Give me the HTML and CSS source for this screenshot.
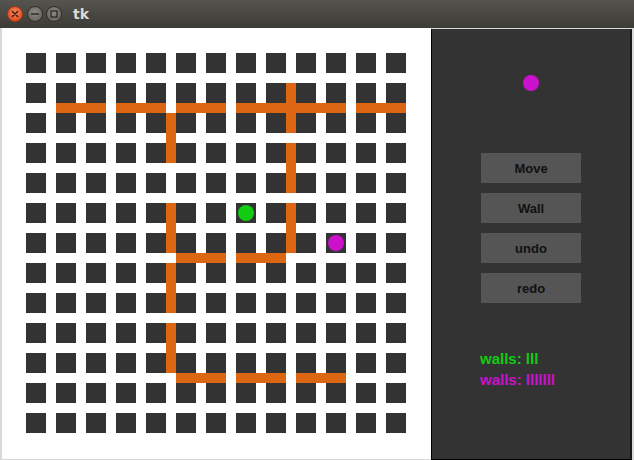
FILE: index.html
```html
<!DOCTYPE html>
<html>
<head>
<meta charset="utf-8">
<link rel="stylesheet" href="styles.css">
</head>
<body>
<div class="titlebar">
  <div class="wbtns">
    <svg class="wbtn" width="16" height="16" viewBox="0 0 16 16">
      <defs><radialGradient id="gc" cx="50%" cy="40%" r="60%"><stop offset="0" stop-color="#f6875c"/><stop offset="1" stop-color="#df4a1c"/></radialGradient></defs>
      <circle cx="8" cy="8" r="7.5" fill="url(#gc)" stroke="#9b3a15" stroke-width="1"/>
      <path d="M5.4 5.4 L10.6 10.6 M10.6 5.4 L5.4 10.6" stroke="#3b1a0c" stroke-width="1.4" stroke-linecap="round"/>
    </svg>
    <svg class="wbtn" width="16" height="16" viewBox="0 0 16 16">
      <defs><radialGradient id="gm" cx="50%" cy="40%" r="60%"><stop offset="0" stop-color="#8a8984"/><stop offset="1" stop-color="#66655f"/></radialGradient></defs>
      <circle cx="8" cy="8" r="7.5" fill="url(#gm)" stroke="#2f2e2a" stroke-width="1"/>
      <path d="M4.6 8 L11.4 8" stroke="#2b2a27" stroke-width="1.5" stroke-linecap="round"/>
    </svg>
    <svg class="wbtn" width="16" height="16" viewBox="0 0 16 16">
      <circle cx="8" cy="8" r="7.5" fill="url(#gm)" stroke="#2f2e2a" stroke-width="1"/>
      <rect x="5" y="5" width="6" height="6" fill="none" stroke="#2b2a27" stroke-width="1.3"/>
    </svg>
  </div>
  <div class="title">tk</div>
</div>
<div class="main">
  <div class="canvas">
    <div class="board" id="board">
      <div class="sq"></div><div class="sq"></div><div class="sq"></div><div class="sq"></div><div class="sq"></div><div class="sq"></div><div class="sq"></div><div class="sq"></div><div class="sq"></div><div class="sq"></div><div class="sq"></div><div class="sq"></div><div class="sq"></div>
      <div class="sq"></div><div class="sq"></div><div class="sq"></div><div class="sq"></div><div class="sq"></div><div class="sq"></div><div class="sq"></div><div class="sq"></div><div class="sq"></div><div class="sq"></div><div class="sq"></div><div class="sq"></div><div class="sq"></div>
      <div class="sq"></div><div class="sq"></div><div class="sq"></div><div class="sq"></div><div class="sq"></div><div class="sq"></div><div class="sq"></div><div class="sq"></div><div class="sq"></div><div class="sq"></div><div class="sq"></div><div class="sq"></div><div class="sq"></div>
      <div class="sq"></div><div class="sq"></div><div class="sq"></div><div class="sq"></div><div class="sq"></div><div class="sq"></div><div class="sq"></div><div class="sq"></div><div class="sq"></div><div class="sq"></div><div class="sq"></div><div class="sq"></div><div class="sq"></div>
      <div class="sq"></div><div class="sq"></div><div class="sq"></div><div class="sq"></div><div class="sq"></div><div class="sq"></div><div class="sq"></div><div class="sq"></div><div class="sq"></div><div class="sq"></div><div class="sq"></div><div class="sq"></div><div class="sq"></div>
      <div class="sq"></div><div class="sq"></div><div class="sq"></div><div class="sq"></div><div class="sq"></div><div class="sq"></div><div class="sq"></div><div class="sq"></div><div class="sq"></div><div class="sq"></div><div class="sq"></div><div class="sq"></div><div class="sq"></div>
      <div class="sq"></div><div class="sq"></div><div class="sq"></div><div class="sq"></div><div class="sq"></div><div class="sq"></div><div class="sq"></div><div class="sq"></div><div class="sq"></div><div class="sq"></div><div class="sq"></div><div class="sq"></div><div class="sq"></div>
      <div class="sq"></div><div class="sq"></div><div class="sq"></div><div class="sq"></div><div class="sq"></div><div class="sq"></div><div class="sq"></div><div class="sq"></div><div class="sq"></div><div class="sq"></div><div class="sq"></div><div class="sq"></div><div class="sq"></div>
      <div class="sq"></div><div class="sq"></div><div class="sq"></div><div class="sq"></div><div class="sq"></div><div class="sq"></div><div class="sq"></div><div class="sq"></div><div class="sq"></div><div class="sq"></div><div class="sq"></div><div class="sq"></div><div class="sq"></div>
      <div class="sq"></div><div class="sq"></div><div class="sq"></div><div class="sq"></div><div class="sq"></div><div class="sq"></div><div class="sq"></div><div class="sq"></div><div class="sq"></div><div class="sq"></div><div class="sq"></div><div class="sq"></div><div class="sq"></div>
      <div class="sq"></div><div class="sq"></div><div class="sq"></div><div class="sq"></div><div class="sq"></div><div class="sq"></div><div class="sq"></div><div class="sq"></div><div class="sq"></div><div class="sq"></div><div class="sq"></div><div class="sq"></div><div class="sq"></div>
      <div class="sq"></div><div class="sq"></div><div class="sq"></div><div class="sq"></div><div class="sq"></div><div class="sq"></div><div class="sq"></div><div class="sq"></div><div class="sq"></div><div class="sq"></div><div class="sq"></div><div class="sq"></div><div class="sq"></div>
      <div class="sq"></div><div class="sq"></div><div class="sq"></div><div class="sq"></div><div class="sq"></div><div class="sq"></div><div class="sq"></div><div class="sq"></div><div class="sq"></div><div class="sq"></div><div class="sq"></div><div class="sq"></div><div class="sq"></div>

      <div class="wall h" style="left:30px;top:50px"></div>
      <div class="wall h" style="left:90px;top:50px"></div>
      <div class="wall h" style="left:150px;top:50px"></div>
      <div class="wall h" style="left:210px;top:50px"></div>
      <div class="wall h" style="left:270px;top:50px"></div>
      <div class="wall h" style="left:330px;top:50px"></div>
      <div class="wall v" style="left:260px;top:30px"></div>
      <div class="wall v" style="left:260px;top:90px"></div>
      <div class="wall v" style="left:260px;top:150px"></div>
      <div class="wall v" style="left:140px;top:60px"></div>
      <div class="wall v" style="left:140px;top:150px"></div>
      <div class="wall v" style="left:140px;top:210px"></div>
      <div class="wall v" style="left:140px;top:270px"></div>
      <div class="wall h" style="left:150px;top:200px"></div>
      <div class="wall h" style="left:210px;top:200px"></div>
      <div class="wall h" style="left:150px;top:320px"></div>
      <div class="wall h" style="left:210px;top:320px"></div>
      <div class="wall h" style="left:270px;top:320px"></div>

      <div class="pawn green" style="left:212px;top:152px"></div>
      <div class="pawn magenta" style="left:302px;top:182px"></div>
    </div>
  </div>
  <div class="panel">
    <div class="turn"></div>
    <div class="buttons">
      <div class="btn">Move</div>
      <div class="btn">Wall</div>
      <div class="btn">undo</div>
      <div class="btn">redo</div>
    </div>
    <div class="labels">
      <div class="lbl g">walls: lll</div>
      <div class="lbl m">walls: lllllll</div>
    </div>
  </div>
</div>
</body>
</html>
```
FILE: styles.css
```css
html, body {
  margin: 0;
  padding: 0;
}
body {
  width: 634px;
  height: 460px;
  overflow: hidden;
  background: #d9d9d9;
  font-family: "Liberation Sans", Arial, sans-serif;
}
.titlebar {
  height: 28px;
  box-sizing: border-box;
  display: flex;
  align-items: center;
  padding-left: 7px;
  background: linear-gradient(#56544e, #3c3b37);
}
.wbtns {
  display: flex;
  gap: 3.5px;
}
.wbtn {
  display: block;
}
.title {
  margin-left: 11px;
  color: #dfdbd2;
  font-family: "DejaVu Sans", sans-serif;
  font-weight: bold;
  font-size: 14px;
  line-height: 14px;
  margin-top: -1px;
}
.main {
  display: flex;
  padding-left: 2px;
  height: 432px;
}
.canvas {
  width: 429px;
  height: 431px;
  box-sizing: border-box;
  background: #fff;
  padding: 25px 0 0 24px;
}
.board {
  position: relative;
  display: grid;
  grid-template-columns: repeat(13, 20px);
  grid-auto-rows: 20px;
  gap: 10px;
}
.sq {
  background: #333333;
}
.wall {
  position: absolute;
  background: #dd6612;
}
.wall.h {
  width: 50px;
  height: 10px;
}
.wall.v {
  width: 10px;
  height: 50px;
}
.pawn {
  position: absolute;
  width: 16px;
  height: 16px;
  border-radius: 50%;
}
.green { background: #11cc11; }
.magenta { background: #cc11cc; }
.panel {
  width: 201px;
  height: 431px;
  margin-top: 1px;
  box-sizing: border-box;
  background: #333333;
  border-left: 1px solid #000;
  border-right: 2px solid #1a1a1a;
  border-bottom: 1px solid #000;
  display: flex;
  flex-direction: column;
  align-items: center;
}
.turn {
  width: 16px;
  height: 16px;
  border-radius: 50%;
  background: #cc11cc;
  margin-top: 46px;
}
.buttons {
  margin-top: 62px;
  display: flex;
  flex-direction: column;
  gap: 10px;
}
.btn {
  width: 100px;
  height: 30px;
  background: #555555;
  color: #111;
  font-weight: bold;
  font-size: 13px;
  display: flex;
  align-items: center;
  justify-content: center;
}
.labels {
  align-self: flex-start;
  margin-left: 48px;
  margin-top: 45px;
}
.lbl {
  font-weight: bold;
  font-size: 15px;
  line-height: 21px;
}
.lbl.g { color: #11cc11; }
.lbl.m { color: #cc11cc; }
```
